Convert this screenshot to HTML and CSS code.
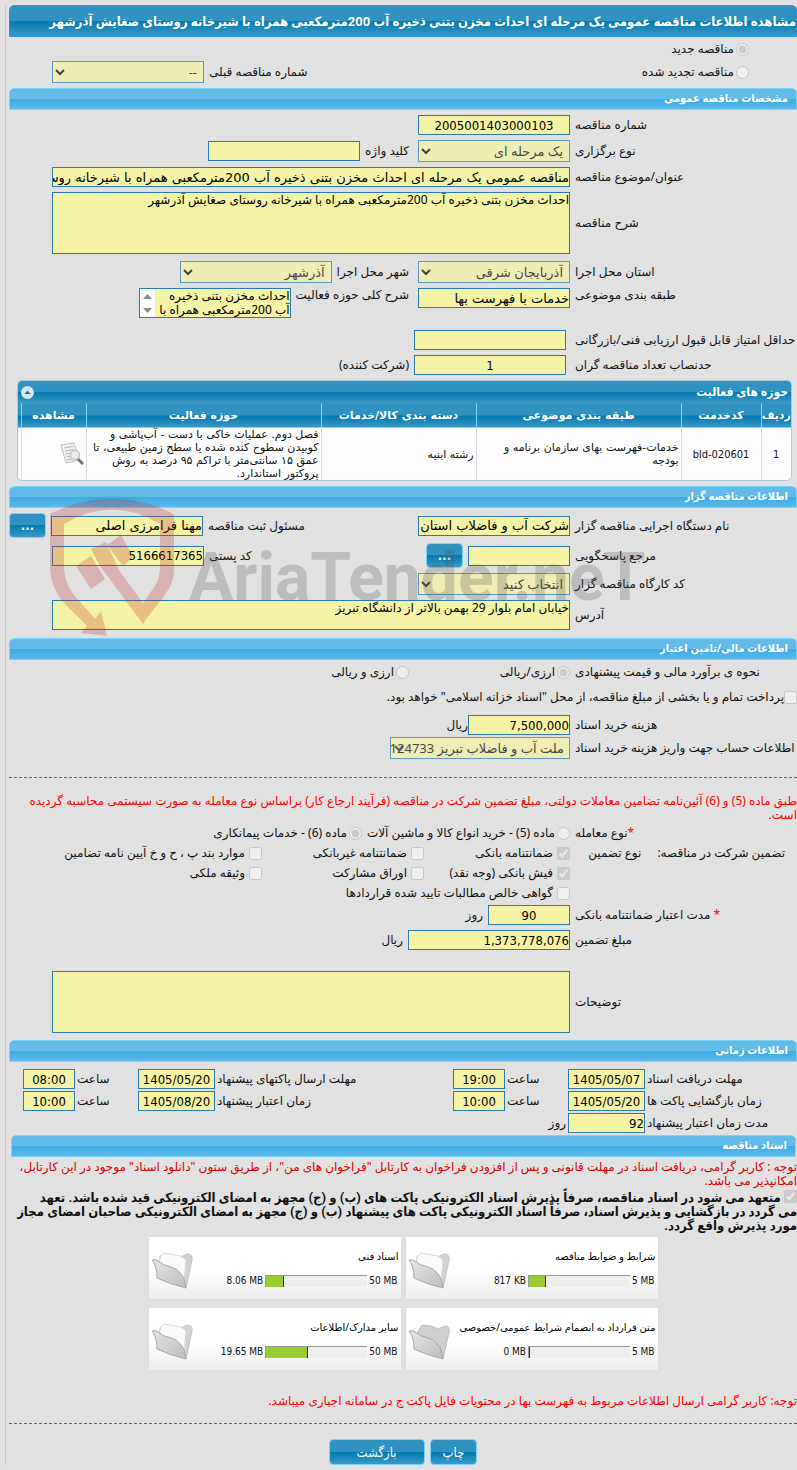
FILE: index.html
```html
<!DOCTYPE html>
<html lang="fa" dir="rtl">
<head>
    <meta charset="UTF-8">
    <meta name="viewport" content="width=device-width, initial-scale=1.0">
    <title>مشاهده اطلاعات مناقصه عمومی</title>
    <link rel="stylesheet" href="styles.css">
</head>
<body>
<form class="page" action="#" method="post">
    <h1 class="page-title">مشاهده اطلاعات مناقصه عمومی یک مرحله ای احداث مخزن بتنی ذخیره آب 200مترمکعبی همراه با شیرخانه روستای صغایش آذرشهر</h1>

    <!-- Tender kind -->
    <div class="row tight kind">
        <input type="radio" id="kindNew" name="kind" checked disabled>
        <label for="kindNew">مناقصه جدید</label>
    </div>
    <div class="row tight kind">
        <input type="radio" id="kindRenew" name="kind" disabled>
        <label for="kindRenew">مناقصه تجدید شده</label>
        <span class="previous">
            <label for="prevNo">شماره مناقصه قبلی</label>
            <select id="prevNo" class="field" disabled><option>--</option></select>
        </span>
    </div>

    <!-- General info -->
    <h2 class="section">مشخصات مناقصه عمومی</h2>
    <div class="row">
        <label class="label" for="tenderNo">شماره مناقصه</label>
        <input type="text" id="tenderNo" class="field center" value="2005001403000103" readonly>
    </div>
    <div class="row">
        <label class="label" for="holdType">نوع برگزاری</label>
        <select id="holdType" class="field" disabled><option>یک مرحله ای</option></select>
        <label class="next" for="keyword">کلید واژه</label>
        <input type="text" id="keyword" class="field" readonly>
    </div>
    <div class="row wide">
        <label class="label" for="subject">عنوان/موضوع مناقصه</label>
        <input type="text" id="subject" class="field" value="مناقصه عمومی یک مرحله ای احداث مخزن بتنی ذخیره آب 200مترمکعبی همراه با شیرخانه روستای صغایش آذرشهر" readonly>
    </div>
    <div class="row wide">
        <label class="label" for="desc">شرح مناقصه</label>
        <textarea id="desc" class="field tall" readonly>احداث مخزن بتنی ذخیره آب 200مترمکعبی همراه با شیرخانه روستای صغایش آذرشهر</textarea>
    </div>
    <div class="row loose">
        <label class="label" for="province">استان محل اجرا</label>
        <select id="province" class="field" disabled><option>آذربایجان شرقی</option></select>
        <label class="next" for="city">شهر محل اجرا</label>
        <select id="city" class="field" disabled><option>آذرشهر</option></select>
    </div>
    <div class="row top">
        <label class="label" for="category">طبقه بندی موضوعی</label>
        <input type="text" id="category" class="field" value="خدمات با فهرست بها" readonly>
        <label class="next" for="activity">شرح کلی حوزه فعالیت</label>
        <div class="scroll-box field">
            <textarea id="activity" readonly>احداث مخزن بتنی ذخیره آب 200مترمکعبی همراه با شیرخانه روستای صغایش آذرشهر</textarea>
            <svg class="scroll-arrows" viewBox="0 0 15 28" aria-hidden="true">
                <rect width="15" height="28" fill="#fcfcfc"/>
                <path d="M3 10h9L7.500 5z M3 19h9l-4.500 5z" fill="#8b8b8b"/>
            </svg>
        </div>
    </div>
    <div class="row far indent">
        <label class="label" for="minScore">حداقل امتیاز قابل قبول ارزیابی فنی/بازرگانی</label>
        <input type="text" id="minScore" class="field" readonly>
    </div>
    <div class="row indent">
        <label class="label" for="quorum">حدنصاب تعداد مناقصه گران</label>
        <input type="text" id="quorum" class="field center" value="1" readonly>
        <span>(شرکت کننده)</span>
    </div>

    <!-- Activity table -->
    <div class="grid-box">
        <div class="grid-title">
            <span>حوزه های فعالیت</span>
            <button type="button" class="collapse" aria-label="بستن">
                <svg viewBox="0 0 13 13"><circle cx="6.500" cy="6.500" r="6.500" fill="#d9e9f7"/><path d="M3.500 8h6l-3-3.500z" fill="#1a6d9c"/></svg>
            </button>
        </div>
        <table class="grid">
            <thead>
                <tr>
                    <th class="col-row">ردیف</th>
                    <th class="col-code">کدخدمت</th>
                    <th class="col-cat">طبقه بندی موضوعی</th>
                    <th class="col-goods">دسته بندی کالا/خدمات</th>
                    <th class="col-area">حوزه فعالیت</th>
                    <th class="col-view">مشاهده</th>
                    <th></th>
                </tr>
            </thead>
            <tbody>
                <tr>
                    <td class="mid">1</td>
                    <td class="mid">bld-020601</td>
                    <td>خدمات-فهرست بهای سازمان برنامه و بودجه</td>
                    <td>رشته ابنیه</td>
                    <td>فصل دوم. عملیات خاکی با دست - آب‌پاشی و کوبیدن سطوح کنده شده یا سطح زمین طبیعی، تا عمق ۱۵ سانتی‌متر با تراکم ۹۵ درصد به روش پروکتور استاندارد.</td>
                    <td>
                        <svg class="view-icon" viewBox="0 0 24 24" aria-hidden="true">
                            <path d="M1 3l13-2 5 17-13 3z" fill="#f1f1f1" stroke="#bdbdbd"/>
                            <path d="M4 6l9-1.500M5 9l9-1.500M5.500 12l6-1M6.500 15l4-.7M7 18l5-1" stroke="#b0b0b0" fill="none"/>
                            <circle cx="15" cy="13" r="4.500" fill="#e8eef2" fill-opacity=".8" stroke="#c4c4c4" stroke-width="1.500"/>
                            <path d="M18 17l5 5" stroke="#777" stroke-width="3"/>
                        </svg>
                    </td>
                    <td></td>
                </tr>
            </tbody>
        </table>
    </div>

    <!-- Tender holder -->
    <h2 class="section">اطلاعات مناقصه گزار</h2>
    <div class="row">
        <label class="label" for="org">نام دستگاه اجرایی مناقصه گزار</label>
        <input type="text" id="org" class="field" value="شرکت آب و فاضلاب استان" readonly>
        <div class="side">
            <label for="registrar">مسئول ثبت مناقصه</label>
            <input type="text" id="registrar" class="field" value="مهنا فرامرزی اصلی" readonly>
            <button type="button" class="btn more">...</button>
        </div>
    </div>
    <div class="row">
        <label class="label" for="contact">مرجع پاسخگویی</label>
        <input type="text" id="contact" class="field short" readonly>
        <button type="button" class="btn more">...</button>
        <div class="side postal">
            <label for="zip">کد پستی</label>
            <input type="text" id="zip" class="field number" value="5166617365" readonly>
        </div>
    </div>
    <div class="row">
        <label class="label" for="workshop">کد کارگاه مناقصه گزار</label>
        <select id="workshop" class="field" disabled><option>انتخاب کنید</option></select>
    </div>
    <div class="row wide">
        <label class="label" for="address">آدرس</label>
        <textarea id="address" class="field" readonly>خیابان امام بلوار 29 بهمن بالاتر از دانشگاه تبریز</textarea>
    </div>

    <!-- Financial -->
    <h2 class="section money">اطلاعات مالی/تامین اعتبار</h2>
    <div class="row tight">
        <span class="label">نحوه ی برآورد مالی و قیمت پیشنهادی</span>
        <span class="option first"><input type="radio" id="cur1" name="cur" checked disabled><label for="cur1">ارزی/ریالی</label></span>
        <span class="option"><input type="radio" id="cur2" name="cur" disabled><label for="cur2">ارزی و ریالی</label></span>
    </div>
    <div class="row treasury">
        <input type="checkbox" id="treasury" disabled>
        <label for="treasury">پرداخت تمام و یا بخشی از مبلغ مناقصه، از محل "اسناد خزانه اسلامی" خواهد بود.</label>
    </div>
    <div class="row loose joined">
        <label class="label" for="fee">هزینه خرید اسناد</label>
        <input type="text" id="fee" class="field short number" value="7,500,000" readonly>
        <span>ریال</span>
    </div>
    <div class="row tight">
        <label class="label" for="account">اطلاعات حساب جهت واریز هزینه خرید اسناد</label>
        <select id="account" class="field account" disabled><option>ملت آب و فاضلاب تبریز 124733</option></select>
    </div>

    <hr class="dash">
    <p class="warning">طبق ماده (5) و (6) آئین‌نامه تضامین معاملات دولتی، مبلغ تضمین شرکت در مناقصه (فرآیند ارجاع کار) براساس نوع معامله به صورت سیستمی محاسبه گردیده است.</p>

    <!-- Guarantee -->
    <div class="row flat">
        <span class="label"><span class="star">*</span>نوع معامله</span>
        <span class="option"><input type="radio" id="deal5" name="deal" disabled><label for="deal5">ماده (5) - خرید انواع کالا و ماشین آلات</label></span>
        <span class="option"><input type="radio" id="deal6" name="deal" checked disabled><label for="deal6">ماده (6) - خدمات پیمانکاری</label></span>
    </div>
    <div class="checks">
        <div class="checks-label"><span>تضمین شرکت در مناقصه:</span><span>نوع تضمین</span></div>
        <span class="option"><input type="checkbox" id="g1" checked disabled><label for="g1">ضمانتنامه بانکی</label></span>
        <span class="option"><input type="checkbox" id="g2" disabled><label for="g2">ضمانتنامه غیربانکی</label></span>
        <span class="option"><input type="checkbox" id="g3" disabled><label for="g3">موارد بند پ ، ح و خ آیین نامه تضامین</label></span>
        <span></span>
        <span class="option"><input type="checkbox" id="g4" checked disabled><label for="g4">فیش بانکی (وجه نقد)</label></span>
        <span class="option"><input type="checkbox" id="g5" disabled><label for="g5">اوراق مشارکت</label></span>
        <span class="option"><input type="checkbox" id="g6" disabled><label for="g6">وثیقه ملکی</label></span>
        <span></span>
        <span class="option full"><input type="checkbox" id="g7" disabled><label for="g7">گواهی خالص مطالبات تایید شده قراردادها</label></span>
    </div>
    <div class="row tight">
        <label class="label" for="validity"><span class="star">*</span> مدت اعتبار ضمانتنامه بانکی</label>
        <input type="text" id="validity" class="field days center" value="90" readonly>
        <span>روز</span>
    </div>
    <div class="row">
        <label class="label" for="amount">مبلغ تضمین</label>
        <input type="text" id="amount" class="field amount number" value="1,373,778,076" readonly>
        <span>ریال</span>
    </div>
    <div class="row wide notes">
        <label class="label" for="notes">توضیحات</label>
        <textarea id="notes" class="field tall" readonly></textarea>
    </div>

    <!-- Dates -->
    <h2 class="section dates">اطلاعات زمانی</h2>
    <div class="times">
        <label for="d1">مهلت دریافت اسناد</label>
        <input type="text" id="d1" class="field center" value="1405/05/07" readonly>
        <label for="t1">ساعت</label>
        <input type="text" id="t1" class="field center" value="19:00" readonly>
        <label for="d2">مهلت ارسال پاکتهای پیشنهاد</label>
        <input type="text" id="d2" class="field center" value="1405/05/20" readonly>
        <label for="t2">ساعت</label>
        <input type="text" id="t2" class="field center" value="08:00" readonly>

        <label for="d3">زمان بازگشایی پاکت ها</label>
        <input type="text" id="d3" class="field center" value="1405/05/20" readonly>
        <label for="t3">ساعت</label>
        <input type="text" id="t3" class="field center" value="10:00" readonly>
        <label for="d4">زمان اعتبار پیشنهاد</label>
        <input type="text" id="d4" class="field center" value="1405/08/20" readonly>
        <label for="t4">ساعت</label>
        <input type="text" id="t4" class="field center" value="10:00" readonly>

        <label for="period">مدت زمان اعتبار پیشنهاد</label>
        <input type="text" id="period" class="field number" value="92" readonly>
        <span class="unit">روز</span>
    </div>

    <!-- Documents -->
    <h2 class="section docs">اسناد مناقصه</h2>
    <p class="notice">توجه : کاربر گرامی، دریافت اسناد در مهلت قانونی و پس از افزودن فراخوان به کارتابل "فراخوان های من"، از طریق ستون "دانلود اسناد" موجود در این کارتابل، امکانپذیر می باشد.</p>
    <p class="commit">
        <input type="checkbox" id="commit" checked disabled>
        <label for="commit">متعهد می شود در اسناد مناقصه، صرفاً پذیرش اسناد الکترونیکی پاکت های (ب) و (ج) مجهز به امضای الکترونیکی قید شده باشد. تعهد می&nbsp;گردد در بازگشایی و پذیرش اسناد، صرفاً اسناد الکترونیکی پاکت های پیشنهاد (ب) و (ج) مجهز به امضای الکترونیکی صاحبان امضای مجاز مورد پذیرش واقع گردد.</label>
    </p>

    <svg width="0" height="0" class="defs" aria-hidden="true">
        <defs>
            <linearGradient id="folderFront" x1="0" y1="0" x2="1" y2="1">
                <stop offset="0" stop-color="#e6e6e6"/>
                <stop offset="1" stop-color="#bdbdbd"/>
            </linearGradient>
            <symbol id="folderFull" viewBox="0 0 42 38">
                <path d="M9 12V5l21 1 6-3q6 0 5 6l-6 28z" fill="#d2d2d2" stroke="#c2c2c2"/>
                <path d="M8 12l2-7 3-3 17 3 5 4-2 22z" fill="#fafafa" stroke="#dadada"/>
                <path d="M1 9q4-1 6 1 4 4 13 6 6 1 10 7 4 4 5 14Q18 33 6 27 6 15 1 9z" fill="url(#folderFront)" stroke="#a8a8a8"/>
            </symbol>
            <symbol id="folderEmpty" viewBox="0 0 42 38">
                <path d="M8 13l6-10 9 1 7 3 7-3q5 0 4 6l-6 27z" fill="#cfcfcf" stroke="#bdbdbd"/>
                <path d="M1 9q4-1 6 1 4 4 13 6 6 1 10 7 4 4 5 14Q18 33 6 27 6 15 1 9z" fill="url(#folderFront)" stroke="#a8a8a8"/>
            </symbol>
        </defs>
    </svg>

    <div class="files">
        <div class="file">
            <div class="file-info">
                <a href="#" class="file-name">شرایط و ضوابط مناقصه</a>
                <div class="usage"><span class="used">817 KB</span><div class="bar"><div class="bar-fill" style="width: 17%"></div></div><span>5 MB</span></div>
            </div>
            <svg class="folder"><use href="#folderFull"/></svg>
        </div>
        <div class="file">
            <div class="file-info">
                <a href="#" class="file-name">اسناد فنی</a>
                <div class="usage"><span class="used">8.06 MB</span><div class="bar"><div class="bar-fill" style="width: 18%"></div></div><span>50 MB</span></div>
            </div>
            <svg class="folder"><use href="#folderFull"/></svg>
        </div>
        <div class="file">
            <div class="file-info">
                <a href="#" class="file-name">متن قرارداد به انضمام شرایط عمومی/خصوصی</a>
                <div class="usage"><span class="used">0 MB</span><div class="bar"><div class="bar-fill" style="width: 0%"></div></div><span>5 MB</span></div>
            </div>
            <svg class="folder"><use href="#folderEmpty"/></svg>
        </div>
        <div class="file">
            <div class="file-info">
                <a href="#" class="file-name">سایر مدارک/اطلاعات</a>
                <div class="usage"><span class="used">19.65 MB</span><div class="bar"><div class="bar-fill" style="width: 41%"></div></div><span>50 MB</span></div>
            </div>
            <svg class="folder"><use href="#folderFull"/></svg>
        </div>
    </div>

    <p class="warning last">توجه: کاربر گرامی ارسال اطلاعات مربوط به فهرست بها در محتویات فایل پاکت ج در سامانه اجباری میباشد.</p>
    <hr class="dash end">
    <div class="actions">
        <button type="button" class="btn">چاپ</button>
        <button type="button" class="btn back">بازگشت</button>
    </div>

    <!-- Watermark -->
    <div class="watermark" aria-hidden="true" dir="ltr">
        <svg viewBox="0 0 124 138">
            <path fill="#c02a2a" fill-rule="evenodd" d="M0 15Q62-16 124 15V70C124 92 108 102 93 125L50 67 41 50 56 43 70 73 93 104C104 88 110 84 110 66V25Q62-4 14 25V65C14 94 32 102 45 120L51 112 57 137 31 134 37 127C22 110 0 98 0 67Z"/>
            <path fill="#c02a2a" d="M26 67l15-10 14 23-14 10zM57 46l14-10 12 22-10 9z"/>
        </svg>
        <span>AriaTender.neT</span>
    </div>
</form>
</body>
</html>
```

FILE: styles.css
```css
* {
    box-sizing: border-box;
}

body {
    margin: 0;
    padding: 5px 0 4px 5px;
    background-color: #e1e1e1;
    color: #111;
    font-family: Tahoma, "Noto Sans", "DejaVu Sans", sans-serif;
    font-size: 12px;
    line-height: 14px;
    overflow-x: hidden;
}

.page {
    position: relative;
    padding-left: 3px;
    border-left: 1px solid #c8c8c8;
}

input, select, textarea, button {
    margin: 0;
    font-family: inherit;
}

input, .grid {
    font-family: Tahoma, "DejaVu Sans", sans-serif;
}

p {
    margin: 0;
}

input[type="radio"],
input[type="checkbox"] {
    width: 13px;
    height: 13px;
    flex: none;
}

/* Bars */
.page-title,
.section,
.grid-title,
.commit {
    font-family: Tahoma, Roboto, "DejaVu Sans Condensed", sans-serif;
}

.number,
.center,
.usage,
.btn,
.grid .mid {
    font-family: Tahoma, "DejaVu Sans Condensed", "DejaVu Sans", sans-serif;
}

.page-title {
    height: 32px;
    margin: 0;
    border: 1px solid #2694e8;
    border-radius: 5px 5px 0 0;
    background: linear-gradient(#2f92c0 0, #2f92c0 50%, #0079b0 50%, #3c99c5 100%);
    color: #fff;
    font-size: 13px;
    line-height: 32px;
    white-space: nowrap;
}

.section {
    height: 22px;
    margin: 5px 0 0;
    padding: 0 8px;
    border: 1px solid #77d5f7;
    border-radius: 5px 5px 0 0;
    background: linear-gradient(#64bbea 0, #64bbea 50%, #3baae3 50%, #5cb8ea 100%);
    color: #fff;
    font-size: 11px;
    line-height: 20px;
}

.section.dates {
    margin-top: 7px;
}

.section.money {
    margin-top: 8px;
}

/* Form rows */
.row {
    display: flex;
    align-items: center;
    gap: 5px;
    min-height: 20px;
    margin-top: 5px;
    white-space: nowrap;
}

.row.tight {
    margin-top: 2px;
}

.row.flat {
    margin-top: 1px;
}

.row.loose {
    margin-top: 7px;
}

.row.far {
    margin-top: 12px;
}

.row.top {
    align-items: flex-start;
}

.label {
    flex: none;
    width: 222px;
    text-align: left;
}

.next {
    padding-right: 4px;
}

.field {
    width: 152px;
    height: 20px;
    padding: 0;
    border: 1px solid #2a7aab;
    border-radius: 0;
    background-color: #f5f3a5;
    color: #000;
    font-size: 13px;
}

select.field {
    height: 22px;
    padding: 0 2px;
}

textarea {
    height: 30px;
    line-height: 14px;
    resize: none;
    overflow: hidden;
}

textarea.field {
    height: 30px;
    font-size: 12px;
}

textarea.tall {
    height: 62px;
}

.center {
    text-align: center;
}

.number {
    direction: ltr;
    text-align: right;
}

.wide {
    padding-left: 43px;
}

.wide .field {
    flex: 1;
    min-width: 0;
}

.indent .label {
    margin-left: 4px;
}

.kind {
    gap: 2px;
    padding-right: 48px;
}

.previous {
    display: flex;
    align-items: center;
    gap: 5px;
    margin-right: auto;
    padding-left: 43px;
}

.scroll-box {
    display: flex;
    height: 30px;
}

.scroll-box textarea {
    flex: 1;
    min-width: 0;
    height: 28px;
    padding: 0;
    border: 0;
    background: none;
    font-size: 12px;
}

.scroll-arrows {
    flex: none;
    width: 15px;
    height: 28px;
}

.side {
    display: flex;
    flex: 1;
    align-items: center;
    justify-content: flex-end;
    gap: 5px;
}

.postal {
    padding-left: 43px;
}

.short {
    width: 102px;
}

.days {
    width: 82px;
}

.amount {
    width: 162px;
}

/* long account names run over the arrow */
select.account {
    width: 180px;
    padding: 0 5px 0 0;
    appearance: none;
    background-image: url("data:image/svg+xml,%3Csvg xmlns='http://www.w3.org/2000/svg' width='10' height='7'%3E%3Cpath d='M1 1l4 4 4-4' fill='none' stroke='%23222' stroke-width='2'/%3E%3C/svg%3E");
    background-repeat: no-repeat;
    background-position: 3px center;
    opacity: 0.7;
}

.joined {
    gap: 0;
}

.joined .label {
    margin-left: 5px;
}

.option {
    display: flex;
    align-items: center;
    gap: 2px;
}

.option.first {
    width: 156px;
}

.row.treasury {
    gap: 0;
    margin-bottom: 8px;
}

.star {
    color: #f00;
}

.dash {
    height: 0;
    margin: 18px 0 16px;
    border: 0;
    border-top: 1px dashed #2a7aab;
}

.warning {
    color: #f00;
}

.checks {
    display: grid;
    grid-template-columns: 222px 141px 157px 1fr;
    grid-auto-rows: 20px;
    column-gap: 5px;
    align-items: center;
    white-space: nowrap;
}

.checks-label {
    display: flex;
    gap: 16px;
    padding-right: 12px;
}

.checks .option {
    gap: 4px;
}

.full {
    grid-column: 2 / -1;
}

.row.notes {
    margin-top: 21px;
}

/* Buttons */
.btn {
    height: 26px;
    padding: 0 12px;
    border: 1px solid #77d5f7;
    border-radius: 4px;
    background: linear-gradient(#2f92c0 0, #2f92c0 50%, #0079b0 50%, #3c99c5 100%);
    color: #fff;
    font-size: 13px;
}

.more {
    width: 37px;
    height: 25px;
    padding: 0;
    font-weight: bold;
}

.back {
    width: 96px;
}

/* Activity table */
.grid-box {
    margin: 5px 5px 0 8px;
    border: 1px solid #a6c9e2;
    border-radius: 5px;
    background-color: #fdfdfd;
    overflow: hidden;
}

.grid-title {
    display: flex;
    align-items: center;
    justify-content: space-between;
    height: 22px;
    padding: 0 3px;
    background: linear-gradient(#2f92c0 0, #2f92c0 50%, #0079b0 50%, #3c99c5 100%);
    color: #fff;
    font-size: 12px;
    font-weight: bold;
}

.collapse {
    width: 13px;
    height: 13px;
    padding: 0;
    border: 0;
    background: none;
}

.collapse svg {
    display: block;
}

.grid {
    width: 100%;
    border-collapse: collapse;
    table-layout: fixed;
    font-size: 11px;
    line-height: 13px;
}

.grid th {
    height: 24px;
    padding: 0;
    border-left: 1px solid #77d5f7;
    border-top: 1px solid #2694e8;
    border-bottom: 1px solid #77d5f7;
    background: linear-gradient(#2f92c0 0, #2f92c0 50%, #0079b0 50%, #3c99c5 100%);
    color: #fff;
    white-space: nowrap;
}

.grid td {
    height: 52px;
    padding: 0 2px;
    border-left: 1px solid #ddd;
}

.grid th:last-child,
.grid td:last-child {
    padding: 0;
    border-left: 0;
}

.grid .mid {
    text-align: center;
}

.col-row { width: 30px; }
.col-code { width: 80px; }
.col-cat { width: 205px; }
.col-goods { width: 155px; }
.col-area { width: 235px; }
.col-view { width: 65px; }

.view-icon {
    display: block;
    width: 24px;
    height: 24px;
}

/* Dates */
.times {
    display: grid;
    grid-template-columns: 150px 77px 59px 52px 1fr 77px 59px 52px;
    gap: 2px;
    align-items: center;
    margin-top: 7px;
    padding-left: 14px;
    text-align: left;
    white-space: nowrap;
}

.times .field {
    width: 100%;
}

.times .unit {
    text-align: right;
}

.times .number {
    text-align: right;
}

/* Documents */
.section.docs {
    margin: 2px 1px 3px 2px;
}

.notice {
    color: #d40000;
}

.commit {
    margin-top: 2px;
    font-size: 13px;
    font-weight: bold;
}

.commit input {
    vertical-align: -1px;
}

.defs {
    position: absolute;
}

.files {
    display: flex;
    flex-wrap: wrap;
    justify-content: center;
    gap: 8px 3px;
    width: 512px;
    margin: 4px auto 0;
}

.file {
    display: flex;
    width: 254px;
    height: 63px;
    padding: 11px 2px 0;
    border: 1px solid #ddd;
    border-top-color: #fff;
    background: linear-gradient(#fff 55%, #ededed);
    font-size: 10px;
}

.file-info {
    flex: 1;
}

.file-name {
    display: block;
    color: #000;
    text-decoration: none;
    white-space: nowrap;
}

.usage {
    display: flex;
    direction: ltr;
    align-items: center;
    justify-content: flex-end;
    gap: 2px;
    margin-top: 11px;
    padding-right: 1px;
}

.bar {
    width: 102px;
    height: 12px;
    border-top: 1px solid #999;
    border-left: 1px solid #999;
    background-color: #eee;
}

.bar-fill {
    height: 11px;
    border-right: 1px solid #333;
    background-color: #9c3;
}

.folder {
    flex: none;
    width: 42px;
    height: 38px;
    margin-top: 2px;
}

.warning.last {
    margin-top: 23px;
}

.dash.end {
    margin: 15px 0;
}

.actions {
    display: flex;
    justify-content: center;
    gap: 5px;
}

/* Watermark over the holder section */
.watermark {
    position: absolute;
    top: 494px;
    left: 44px;
    display: flex;
    align-items: center;
    gap: 15px;
    color: #555;
    opacity: 0.25;
    pointer-events: none;
}

.watermark svg {
    width: 124px;
    height: 138px;
}

.watermark span {
    padding-top: 20px;
    font-family: Roboto, "Liberation Sans", sans-serif;
    font-size: 66px;
    font-weight: bold;
    line-height: 80px;
}
```
